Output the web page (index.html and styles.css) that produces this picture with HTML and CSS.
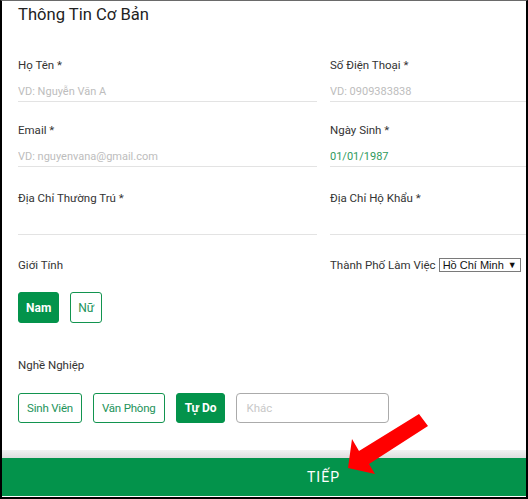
FILE: index.html
```html
<!DOCTYPE html>
<html lang="vi">
<head>
<meta charset="utf-8">
<title>Thông Tin Cơ Bản</title>
<link rel="stylesheet" href="styles.css">
</head>
<body>
<div class="frame">
  <div class="page">
    <div class="card">
      <h2 class="title">Thông Tin Cơ Bản</h2>

      <div class="row">
        <div class="field">
          <label class="label">Họ Tên *</label>
          <input class="input" type="text" placeholder="VD: Nguyễn Văn A">
        </div>
        <div class="field">
          <label class="label">Số Điện Thoại *</label>
          <input class="input" type="text" placeholder="VD: 0909383838">
        </div>
      </div>

      <div class="row row-date">
        <div class="field">
          <label class="label">Email *</label>
          <input class="input" type="text" placeholder="VD: nguyenvana@gmail.com">
        </div>
        <div class="field">
          <label class="label">Ngày Sinh *</label>
          <input class="input input-date" type="text" value="01/01/1987">
        </div>
      </div>

      <div class="row row-address">
        <div class="field">
          <label class="label">Địa Chỉ Thường Trú *</label>
          <input class="input" type="text">
        </div>
        <div class="field">
          <label class="label">Địa Chỉ Hộ Khẩu *</label>
          <input class="input" type="text">
        </div>
      </div>

      <div class="row row-gender">
        <div class="field">
          <div class="label">Giới Tính</div>
          <div class="choices choices-gender">
            <button class="chip chip-on chip-tall">Nam</button>
            <button class="chip chip-tall">Nữ</button>
          </div>
        </div>
        <div class="field">
          <div class="city">
            <span class="label">Thành Phố Làm Việc</span>
            <span class="select"><span class="select-text">Hồ Chí Minh</span><span class="select-caret">▼</span></span>
          </div>
        </div>
      </div>

      <div class="job">
        <div class="label">Nghề Nghiệp</div>
        <div class="choices">
          <button class="chip">Sinh Viên</button>
          <button class="chip">Văn Phòng</button>
          <button class="chip chip-on chip-bold">Tự Do</button>
          <input class="other" type="text" placeholder="Khác">
        </div>
      </div>
    </div>
    <div class="shade"></div>
    <div class="footer">TIẾP</div>
  </div>
</div>
<svg class="arrow" width="528" height="499" viewBox="0 0 528 499">
  <polygon points="348,468 352,439 359,451 419,414 428,426 369,464 375,474" fill="#ff0000"/>
</svg>
</body>
</html>
```

FILE: styles.css
```css
html, body {
  margin: 0;
  padding: 0;
  background: #fff;
}

body {
  position: relative;
  width: 528px;
  height: 499px;
  overflow: hidden;
  font-family: Roboto, "Noto Sans", Arial, sans-serif;
  color: #333;
}

.frame {
  width: 528px;
  height: 499px;
  box-sizing: border-box;
  border-left: 2px solid #000;
  border-right: 2px solid #000;
  border-bottom: 2px solid #000;
  border-top: 1px solid #6a6a6a;
  overflow: hidden;
}

.page {
  width: 643px;
}

.card {
  background: #fff;
  padding: 4px 16px 27px;
}

.title {
  margin: 0;
  font-size: 16.6px;
  line-height: 20px;
  font-weight: 400;
  color: #222;
}

.row {
  display: grid;
  grid-template-columns: 299px 299px;
  column-gap: 13px;
  margin-top: 20px;
}

.title + .row {
  margin-top: 32px;
}

.row-address {
  margin-top: 23px;
}

.row-gender {
  margin-top: 22px;
}

.field {
  display: flex;
  flex-direction: column;
}

.label {
  display: block;
  font-size: 11.5px;
  line-height: 16px;
  color: #333;
}

.input {
  display: block;
  width: 100%;
  box-sizing: border-box;
  height: 29px;
  margin: 0;
  padding: 10px 0 2px;
  border: 0;
  border-bottom: 1px solid #e3e3e3;
  outline: none;
  font-family: Roboto, "Noto Sans", Arial, sans-serif;
  font-size: 11px;
  line-height: 16px;
  color: #333;
  background: transparent;
}

.input::placeholder {
  color: #bdbdbd;
}

.input-date {
  color: #2f9a5c;
}

.city {
  display: flex;
  align-items: center;
  gap: 3px;
  height: 16px;
}

.select {
  display: inline-flex;
  align-items: center;
  justify-content: space-between;
  box-sizing: border-box;
  width: 82px;
  height: 14px;
  padding: 0 3px 0 3px;
  border: 1px solid #7a7a7a;
  font-family: "Liberation Sans", Arial, sans-serif;
  font-size: 11px;
  line-height: 12px;
  color: #111;
}

.select-caret {
  font-size: 9px;
}

.choices {
  display: flex;
  gap: 11px;
  margin-top: 20px;
}

.choices-gender {
  margin-top: 19px;
}

.chip {
  box-sizing: border-box;
  height: 30px;
  margin: 0;
  padding: 0 8px;
  border: 1px solid #12944f;
  border-radius: 3px;
  background: #fff;
  color: #23935a;
  font-family: Roboto, "Noto Sans", Arial, sans-serif;
  font-size: 11.5px;
  letter-spacing: -0.2px;
  line-height: 16px;
  cursor: pointer;
}

.chip-tall {
  height: 31px;
  padding: 0 7px;
  font-size: 12px;
  letter-spacing: 0;
}

.chip-on {
  background: #03934b;
  border-color: #03934b;
  color: #fff;
  font-weight: 700;
}

.chip-bold {
  font-size: 12px;
  letter-spacing: 0;
}

.other {
  box-sizing: border-box;
  width: 153px;
  height: 30px;
  margin: 0;
  padding: 0 9px;
  border: 1px solid #ababab;
  border-radius: 4px;
  outline: none;
  font-family: Roboto, "Noto Sans", Arial, sans-serif;
  font-size: 11.5px;
}

.other::placeholder {
  color: #c8c8c8;
}

.job {
  margin-top: 34px;
}

.shade {
  height: 8px;
  background: linear-gradient(#f2f2f2, #dedede);
}

.footer {
  height: 38px;
  background: #03934b;
  color: #fff;
  font-size: 14px;
  line-height: 38px;
  letter-spacing: 1px;
  text-align: center;
}

.arrow {
  position: absolute;
  left: 0;
  top: 0;
  pointer-events: none;
}
```
